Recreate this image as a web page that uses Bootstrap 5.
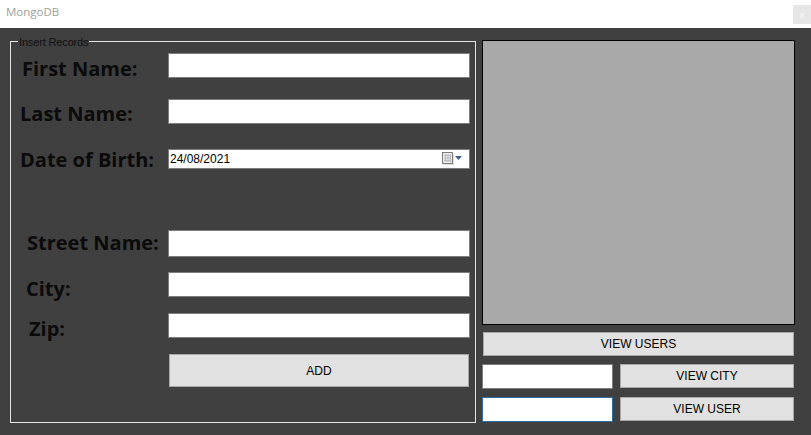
<!DOCTYPE html>
<html lang="en">
<head>
  <meta charset="UTF-8">
  <meta name="viewport" content="width=device-width, initial-scale=1.0">
  <title>MongoDB</title>
  <link href="https://cdn.jsdelivr.net/npm/bootstrap@5.3.2/dist/css/bootstrap.min.css" rel="stylesheet">
  <style>
    html, body { height: 435px; overflow: hidden; }
    body { background: #404040; font-family: "Liberation Sans", Arial, sans-serif; font-size: 12px; color: #000; }
    .title-bar { height: 28px; background: #fff; color: #9a9f9c; font: 11.5px "Open Sans", sans-serif; padding: 0 0 0 6px; }
    .close-box { width: 18px; height: 19px; margin-top: 5px; background: #e6e6e6; color: #f4f4f4; font-size: 9px; font-weight: 700; line-height: 19px; text-align: center; }
    .main-area { padding: 6px 16px 0 10px; gap: 6px; }
    .insert-box { width: 466px; height: 389px; border: 1px solid #e4e4e4; margin: 0; padding: 0 5px 0 0; }
    .insert-box legend { float: none; width: auto; font-size: 11px; line-height: 13px; letter-spacing: -.15px; margin: 0 0 0 7px; padding: 2px 1px 0; color: #111; }
    .field-row { display: flex; align-items: flex-start; height: 25px; }
    .field-name { width: 157px; flex: none; font: 700 20px/26px "Open Sans", sans-serif; color: #0b0b0b; white-space: nowrap; }
    .win-input { flex: 1; height: 25px; border: 1px solid #7d7d7d; border-radius: 0; background: #fff; padding: 0 1px; font-size: 12px; box-shadow: none; }
    .win-btn { border: 1px solid #a8a8a8; border-radius: 0; background: #e1e1e1; color: #000; font-size: 12px; padding: 0; }
    .win-btn:hover { background: #e1e1e1; }
    .date-field { height: 20px; color: #000; }
    .date-icon { margin-right: 5px; }
    .r-first { margin-top: 4px; } .r-first .field-name { margin-top: 3px; padding-left: 11px; }
    .r-last { margin-top: 21px; } .r-last .field-name { margin-top: 2px; padding-left: 9px; }
    .r-date { margin-top: 25px; height: 20px; } .r-date .field-name { margin-top: -2px; padding-left: 9px; }
    .r-street { margin-top: 61px; height: 27px; } .r-street .win-input { height: 27px; } .r-street .field-name { padding-left: 16px; }
    .r-city { margin-top: 15px; } .r-city .field-name { margin-top: 4px; padding-left: 15px; }
    .r-zip { margin-top: 16px; } .r-zip .field-name { margin-top: 3px; padding-left: 18px; }
    .add-btn { display: block; width: 300px; height: 33px; margin: 16px 0 0 158px; }
    .side-col { width: 313px; margin-top: 6px; }
    .picture-area { height: 285px; background: #a9a9a9; border: 1px solid #000; }
    .users-btn { width: 311px; height: 24px; margin: 7px 0 0 1px; }
    .lookup-row { gap: 7px; }
    .lookup-row .win-input { flex: none; width: 131px; }
    .lookup-row .win-btn { width: 174px; height: 24px; }
    .focused { border-color: #2b6ea6; }
  </style>
</head>
<body>
  <div class="title-bar d-flex justify-content-between align-items-start">
    <span class="mt-1">MongoDB</span>
    <div class="close-box">x</div>
  </div>

  <div class="main-area d-flex align-items-start">
    <fieldset class="insert-box">
      <legend>Insert Records</legend>
      <div class="field-row r-first"><label class="field-name">First Name:</label><input class="win-input" type="text"></div>
      <div class="field-row r-last"><label class="field-name">Last Name:</label><input class="win-input" type="text"></div>
      <div class="field-row r-date">
        <label class="field-name">Date of Birth:</label>
        <div class="win-input date-field d-flex align-items-center justify-content-between">
          <span>24/08/2021</span>
          <svg width="21" height="14" viewBox="0 0 21 14" class="date-icon">
            <rect x="2" y="2" width="10" height="11" fill="#dfe5d8"/>
            <rect x="0.5" y="0.5" width="10" height="11" fill="#e9e9e6" stroke="#7c7c7c"/>
            <path d="M2 3.5h7M2 6h7M2 8.5h7M3.500 2v8M6 2v8M8.500 2v8" stroke="#b9bdc2"/>
            <path d="M13 4h7l-3.500 4z" fill="#3f5f8f"/>
          </svg>
        </div>
      </div>
      <div class="field-row r-street"><label class="field-name">Street Name:</label><input class="win-input" type="text"></div>
      <div class="field-row r-city"><label class="field-name">City:</label><input class="win-input" type="text"></div>
      <div class="field-row r-zip"><label class="field-name">Zip:</label><input class="win-input" type="text"></div>
      <button class="win-btn add-btn" type="button">ADD</button>
    </fieldset>

    <div class="side-col">
      <div class="picture-area"></div>
      <button class="win-btn users-btn d-block" type="button">VIEW USERS</button>
      <div class="lookup-row d-flex mt-2">
        <input class="win-input" type="text">
        <button class="win-btn" type="button">VIEW CITY</button>
      </div>
      <div class="lookup-row d-flex mt-2">
        <input class="win-input focused" type="text">
        <button class="win-btn" type="button">VIEW USER</button>
      </div>
    </div>
  </div>
  <script src="https://cdn.jsdelivr.net/npm/bootstrap@5.3.2/dist/js/bootstrap.bundle.min.js"></script>
</body>
</html>
